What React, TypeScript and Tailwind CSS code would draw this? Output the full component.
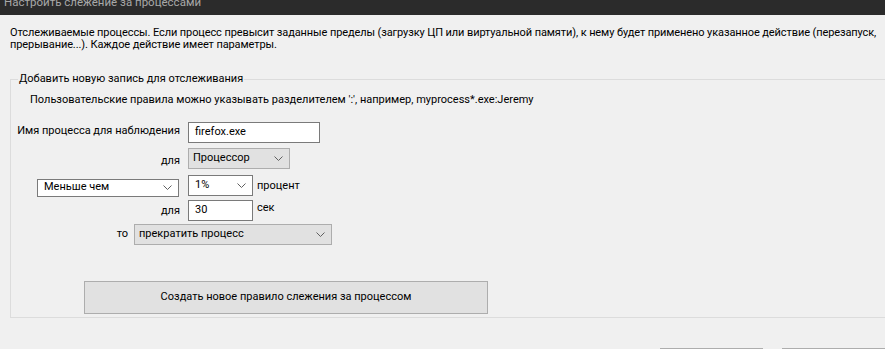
import React from 'react'

// Windows-style dialog: process watch rules

function Chevron() {
  return (
    <svg width="9" height="5" viewBox="0 0 9 5" className="shrink-0">
      <path d="M0.5 0.5 L4.5 4.5 L8.5 0.5" fill="none" stroke="#606060" strokeWidth="1" />
    </svg>
  )
}

type ComboProps = {
  value: string
  className: string
  grey?: boolean
}

function Combo({ value, className, grey }: ComboProps) {
  return (
    <div
      className={
        'flex items-center justify-between border pr-[6px] ' +
        (grey ? 'bg-[#e1e1e1] border-[#adadad] pl-[4px] ' : 'bg-white border-[#7a7a7a] pl-[6px] ') +
        className
      }
    >
      <span className="whitespace-nowrap">{value}</span>
      <Chevron />
    </div>
  )
}

function TextBox({ value, className }: { value: string; className: string }) {
  return (
    <div className={'flex items-center bg-white border border-[#7a7a7a] pl-[6px] ' + className}>
      <span className="whitespace-nowrap">{value}</span>
    </div>
  )
}

export default function App() {
  return (
    <div className="w-[885px] h-[349px] overflow-hidden bg-[#f0f0f0] text-black text-[11px] font-['Roboto',sans-serif]">
      {/* Title bar */}
      <div className="h-[15px] overflow-hidden bg-[#2b2b2b] pl-[4px]">
        <div className="mt-[-5px] text-[11.5px] leading-[15px] text-[#a8a8a8] whitespace-nowrap">
          Настроить слежение за процессами
        </div>
      </div>

      {/* Description */}
      <div className="mt-[12px] pl-[10px] leading-[12px] tracking-[-0.1px] whitespace-nowrap">
        Отслеживаемые процессы. Если процесс превысит заданные пределы (загрузку ЦП или виртуальной памяти), к нему будет применено указанное действие (перезапуск,
        <br />
        прерывание...). Каждое действие имеет параметры.
      </div>

      {/* Group box */}
      <div className="relative mt-[28px] ml-[10px] w-[900px] h-[239px] border border-[#dcdcdc]">
        <span className="absolute left-[7px] top-[-9px] bg-[#f0f0f0] px-[1px] leading-[16px] whitespace-nowrap">
          Добавить новую запись для отслеживания
        </span>

        <div className="mt-[12px] pl-[19px] leading-[16px] whitespace-nowrap">
          Пользовательские правила можно указывать разделителем ':', например, myprocess*.exe:Jeremy
        </div>

        <div className="flex flex-col">
          <div className="mt-[14px] flex items-center">
            <div className="w-[177px] pr-[8px] text-right whitespace-nowrap mt-[-2px]">Имя процесса для наблюдения</div>
            <TextBox value="firefox.exe" className="w-[132px] h-[21px]" />
          </div>

          <div className="mt-[4px] flex items-center">
            <div className="w-[177px] pr-[8px] text-right mt-[6px]">для</div>
            <Combo value="Процессор" grey className="w-[102px] h-[21px]" />
          </div>

          <div className="mt-[5px] flex items-start">
            <Combo value="Меньше чем" className="ml-[26px] mt-[4px] w-[142px] h-[18px]" />
            <Combo value="1%" className="ml-[9px] w-[65px] h-[21px]" />
            <span className="ml-[4px] leading-[21px]">процент</span>
          </div>

          <div className="mt-[3px] flex items-center">
            <div className="w-[177px] pr-[8px] text-right mt-[3px]">для</div>
            <TextBox value="30" className="w-[65px] h-[21px]" />
            <span className="ml-[4px] mt-[-3px]">сек</span>
          </div>

          <div className="mt-[3px] flex items-center">
            <div className="w-[123px] pr-[6px] text-right">то</div>
            <Combo value="прекратить процесс" grey className="w-[198px] h-[21px]" />
          </div>

          <button className="mt-[36px] ml-[73px] w-[404px] h-[33px] bg-[#e1e1e1] border border-[#adadad] text-[11px]">
            Создать новое правило слежения за процессом
          </button>
        </div>
      </div>

      {/* Dialog buttons (cut off at the bottom) */}
      <div className="mt-[30px] ml-[660px] flex gap-[19px]">
        <div className="w-[107px] h-[23px] bg-[#e1e1e1] border border-[#adadad]" />
        <div className="w-[107px] h-[23px] bg-[#e1e1e1] border border-[#adadad]" />
      </div>
    </div>
  )
}
